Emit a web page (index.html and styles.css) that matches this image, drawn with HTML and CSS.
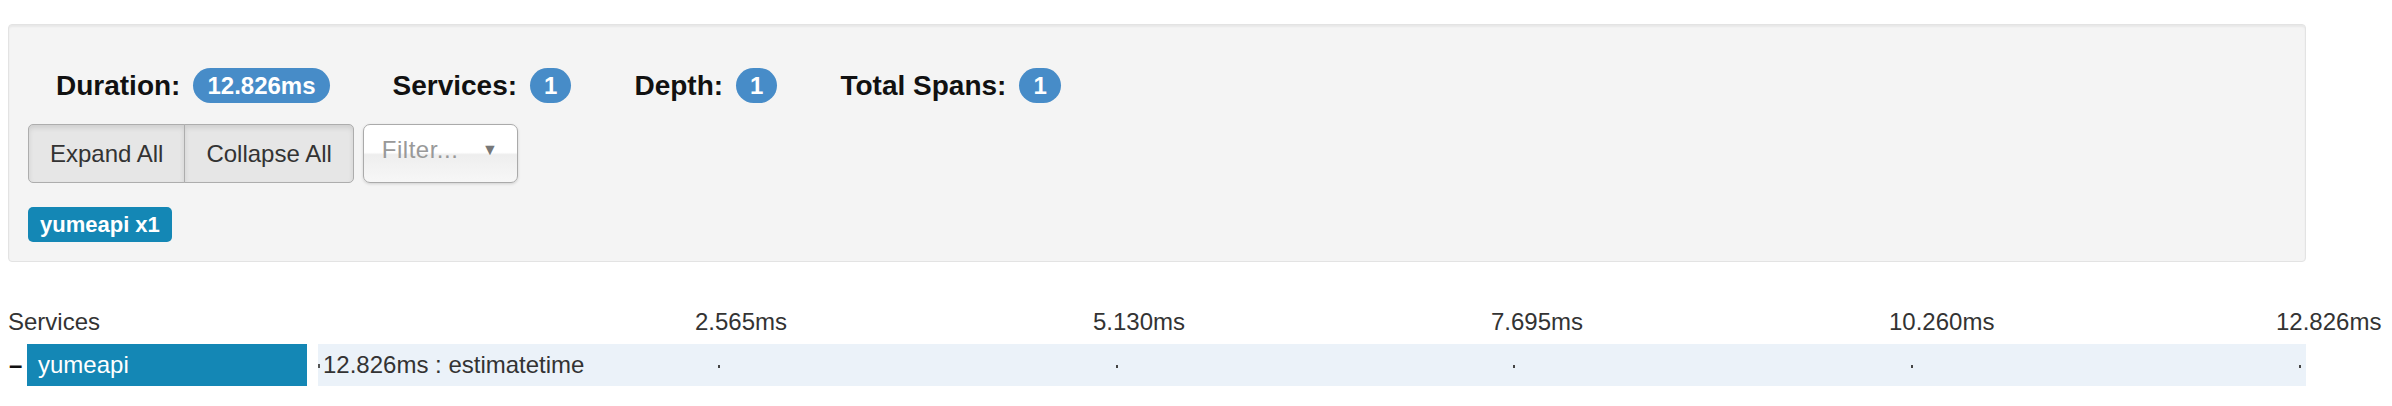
FILE: index.html
```html
<!DOCTYPE html>
<html>
<head>
<meta charset="utf-8">
<link rel="stylesheet" href="styles.css">
</head>
<body>
<div class="page">
  <div class="well">
    <div class="stats">
      <div class="stat"><span class="stat-label">Duration:</span><span class="badge">12.826ms</span></div>
      <div class="stat"><span class="stat-label">Services:</span><span class="badge">1</span></div>
      <div class="stat"><span class="stat-label">Depth:</span><span class="badge">1</span></div>
      <div class="stat"><span class="stat-label">Total Spans:</span><span class="badge">1</span></div>
    </div>
    <div class="controls">
      <div class="btn-group">
        <button class="btn">Expand All</button>
        <button class="btn">Collapse All</button>
      </div>
      <div class="select">
        <span class="select-text">Filter...</span>
        <span class="select-arrow">▼</span>
      </div>
    </div>
    <div class="services">
      <span class="service-label">yumeapi x1</span>
    </div>
  </div>

  <div class="trace">
    <div class="trace-header">
      <div class="header-services">Services</div>
      <div class="ticks">
        <span class="tick-label" style="left: 377px">2.565ms</span>
        <span class="tick-label" style="left: 775px">5.130ms</span>
        <span class="tick-label" style="left: 1173px">7.695ms</span>
        <span class="tick-label" style="left: 1571px">10.260ms</span>
        <span class="tick-label" style="left: 1958px">12.826ms</span>
      </div>
    </div>
    <div class="span-row">
      <div class="toggle">–</div>
      <div class="service-cell">yumeapi</div>
      <div class="bar-area">
        <span class="span-mark"></span>
        <span class="span-text">12.826ms : estimatetime</span>
        <span class="tick-dot" style="left: 400px"></span>
        <span class="tick-dot" style="left: 798px"></span>
        <span class="tick-dot" style="left: 1195px"></span>
        <span class="tick-dot" style="left: 1593px"></span>
        <span class="tick-dot" style="left: 1981px"></span>
      </div>
    </div>
  </div>
</div>
</body>
</html>
```

FILE: styles.css
```css
* {
  box-sizing: border-box;
}

html, body {
  margin: 0;
  padding: 0;
  background: #ffffff;
}

body {
  font-family: "Liberation Sans", Arial, Helvetica, sans-serif;
  color: #333333;
}

.page {
  width: 2306px;
  padding: 24px 0 0 8px;
}

.well {
  width: 2298px;
  background: #f4f4f4;
  border: 1px solid #e3e3e3;
  border-radius: 4px;
  box-shadow: inset 0 2px 2px rgba(0, 0, 0, 0.05);
  padding: 19px;
}

.stats {
  display: flex;
  align-items: center;
  margin-top: 24px;
  padding-left: 28px;
  height: 35px;
  gap: 63px;
}

.stat {
  display: flex;
  align-items: center;
  gap: 13px;
}

.stat-label {
  font-size: 28px;
  font-weight: bold;
  color: #111111;
}

.badge {
  display: inline-flex;
  align-items: center;
  justify-content: center;
  height: 35px;
  padding: 0 14px;
  border-radius: 18px;
  background: #478cc8;
  color: #ffffff;
  font-size: 24px;
  font-weight: bold;
}

.controls {
  display: flex;
  align-items: center;
  gap: 9px;
  margin-top: 21px;
}

.btn-group {
  display: flex;
}

.btn {
  font-family: inherit;
  font-size: 24px;
  color: #333333;
  height: 59px;
  padding: 0 21px;
  background: #e6e6e6;
  border: 1px solid #adadad;
  box-shadow: inset 0 3px 5px rgba(0, 0, 0, 0.1);
  margin: 0;
}

.btn:first-child {
  border-radius: 5px 0 0 5px;
}

.btn:last-child {
  border-radius: 0 5px 5px 0;
  margin-left: -1px;
}

.select {
  width: 155px;
  height: 59px;
  display: flex;
  align-items: center;
  justify-content: space-between;
  padding: 0 19px 8px 18px;
  border: 1px solid #aaaaaa;
  border-radius: 7px;
  background: linear-gradient(#ffffff 0%, #ffffff 48%, #eeeeee 52%, #f7f7f7 100%);
  box-shadow: 0 1px 3px rgba(0, 0, 0, 0.15);
}

.select-text {
  font-size: 24px;
  color: #999999;
  letter-spacing: 0.5px;
}

.select-arrow {
  font-size: 16px;
  color: #777777;
}

.services {
  margin-top: 24px;
  display: flex;
}

.service-label {
  display: inline-flex;
  align-items: center;
  height: 35px;
  padding: 0 12px;
  background: #1487b5;
  color: #ffffff;
  font-size: 22px;
  font-weight: bold;
  border-radius: 5px;
}

.trace {
  width: 2298px;
  color: #333333;
  font-size: 24px;
}

.trace-header {
  display: flex;
  height: 28px;
  line-height: 28px;
  margin-top: 46px;
  margin-bottom: 8px;
}

.header-services {
  width: 310px;
  flex: none;
}

.ticks {
  position: relative;
  width: 1988px;
  flex: none;
}

.tick-label {
  position: absolute;
  top: 0;
  white-space: nowrap;
}

.span-row {
  display: flex;
  height: 42px;
  line-height: 42px;
}

.toggle {
  width: 19px;
  flex: none;
  font-weight: bold;
  color: #111111;
  padding-left: 1px;
}

.service-cell {
  width: 280px;
  flex: none;
  background: #1487b5;
  color: #ffffff;
  padding-left: 11px;
  margin-right: 11px;
}

.bar-area {
  position: relative;
  width: 1988px;
  flex: none;
  background: #ebf2f9;
  padding-left: 5px;
}

.span-mark {
  position: absolute;
  left: 0;
  top: 20px;
  width: 2px;
  height: 4px;
  background: #555555;
}

.tick-dot {
  position: absolute;
  top: 21px;
  width: 2px;
  height: 3px;
  background: #444444;
}
```
